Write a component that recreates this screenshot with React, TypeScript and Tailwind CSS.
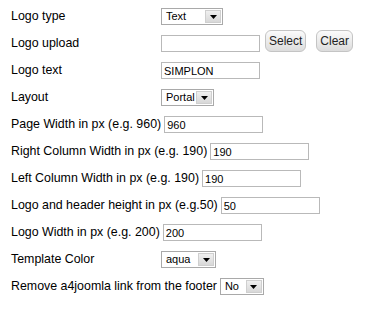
const font = "font-['Liberation_Sans',Arial,sans-serif]";

function Select({ value, width }: { value: string; width: string }) {
  return (
    <div className={`flex h-[17px] items-center border border-[#a9a9a9] bg-white pl-[4px] pr-px ${width}`}>
      <span className="min-w-0 flex-1 whitespace-nowrap text-[11px] leading-none text-black">{value}</span>
      <span className="flex h-[13px] w-[16px] shrink-0 items-center justify-center border border-[#cfcfcf] bg-gradient-to-b from-[#f0f0f0] to-[#d8d8d8]">
        <svg width="7" height="4" viewBox="0 0 7 4">
          <path d="M0 0h7L3.5 4z" fill="#000" />
        </svg>
      </span>
    </div>
  );
}

function Input({ value = '' }: { value?: string }) {
  return (
    <div className="flex h-[17px] w-[99px] items-center border border-[#b9b9b9] bg-white pl-[2px] pt-px text-[11px] leading-none text-black">
      {value}
    </div>
  );
}

function Button({ label }: { label: string }) {
  return (
    <button className="h-[22px] rounded-[6px] border border-[#c4c4c4] bg-gradient-to-b from-[#fbfbfb] to-[#dcdcdc] px-[3px] text-[12px] leading-none text-[#222]">
      {label}
    </button>
  );
}

function Row({ label, children, inline }: { label: string; children: React.ReactNode; inline?: boolean }) {
  return (
    <div className="flex h-[27px] items-center">
      <span className={inline ? 'mr-[3px]' : 'w-[150px]'}>{label}</span>
      {children}
    </div>
  );
}

export default function App() {
  return (
    <div className={`h-[311px] w-[371px] bg-white pl-[11px] pt-[3px] text-[12.4px] text-black ${font}`}>
      <Row label="Logo type">
        <Select value="Text" width="w-[62px]" />
      </Row>
      <Row label="Logo upload">
        <Input />
        <div className="ml-[5px] flex gap-[10px] pb-[6px]">
          <Button label="Select" />
          <Button label="Clear" />
        </div>
      </Row>
      <Row label="Logo text">
        <Input value="SIMPLON" />
      </Row>
      <Row label="Layout">
        <Select value="Portal" width="w-[53px]" />
      </Row>
      <Row label="Page Width in px (e.g. 960)" inline>
        <Input value="960" />
      </Row>
      <Row label="Right Column Width in px (e.g. 190)" inline>
        <Input value="190" />
      </Row>
      <Row label="Left Column Width in px (e.g. 190)" inline>
        <Input value="190" />
      </Row>
      <Row label="Logo and header height in px (e.g.50)" inline>
        <Input value="50" />
      </Row>
      <Row label="Logo Width in px (e.g. 200)" inline>
        <Input value="200" />
      </Row>
      <Row label="Template Color">
        <Select value="aqua" width="w-[55px]" />
      </Row>
      <Row label="Remove a4joomla link from the footer" inline>
        <Select value="No" width="w-[44px]" />
      </Row>
    </div>
  );
}
